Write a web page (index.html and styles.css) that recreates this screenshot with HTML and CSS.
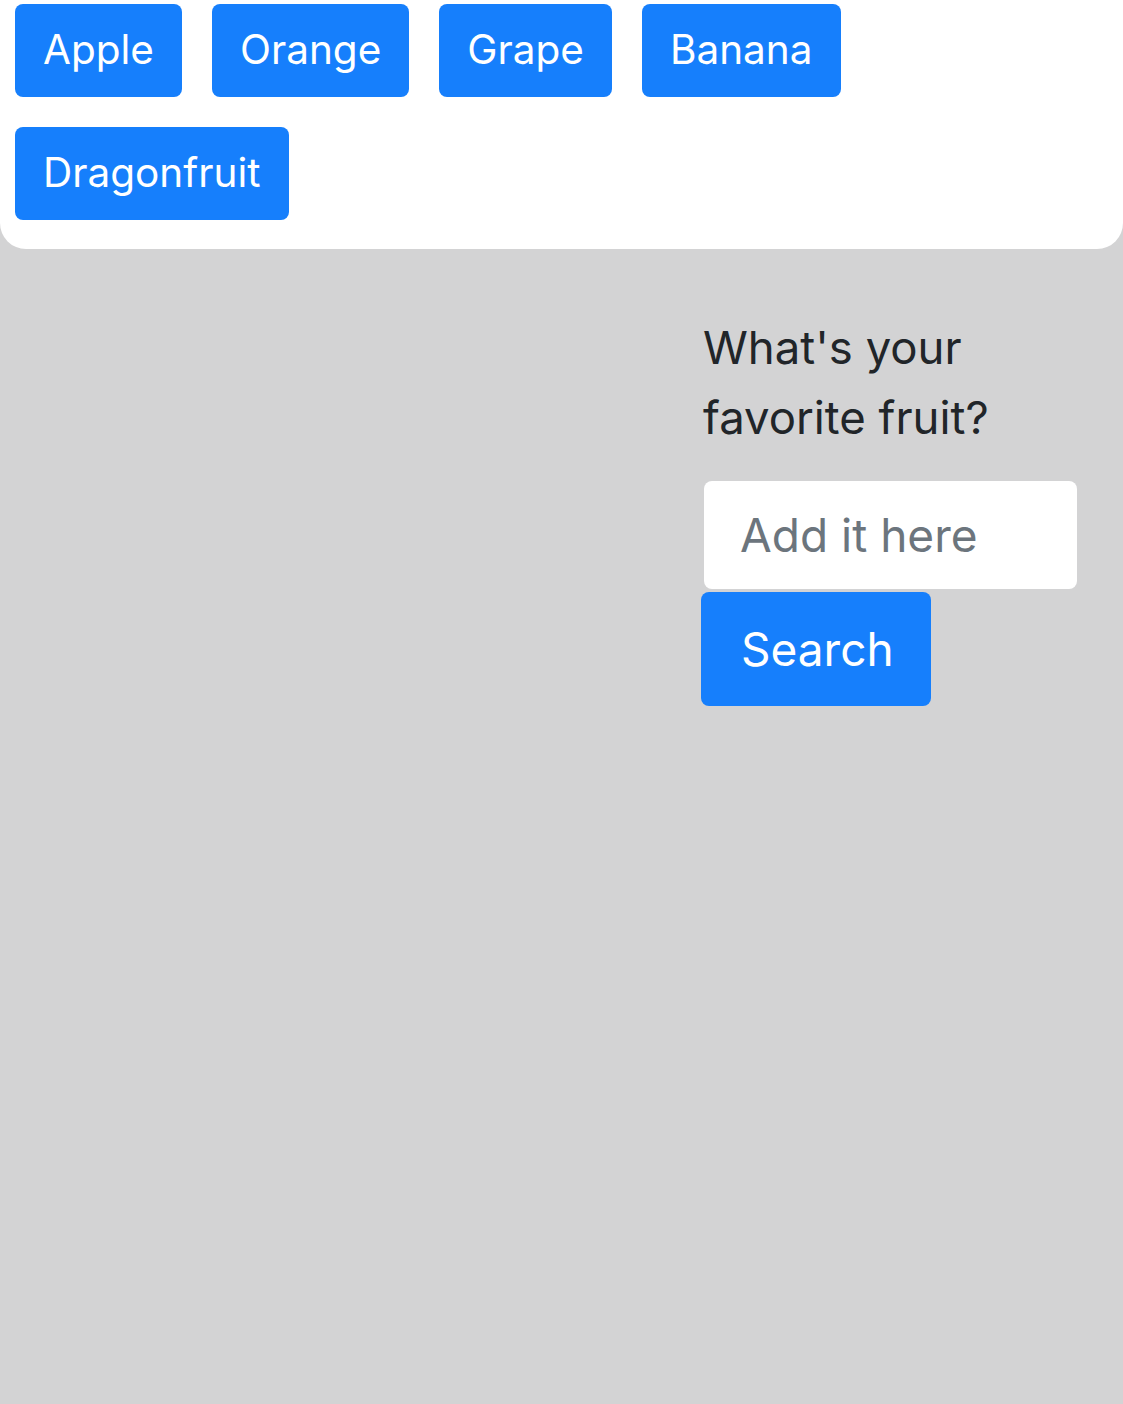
FILE: index.html
```html
<!DOCTYPE html>
<html>
<head>
<meta charset="utf-8">
<link rel="stylesheet" href="styles.css">
</head>
<body>
<div class="card">
  <div class="fruits">
    <button class="btn">Apple</button>
    <button class="btn">Orange</button>
    <button class="btn">Grape</button>
    <button class="btn">Banana</button>
    <button class="btn">Dragonfruit</button>
  </div>
</div>
<div class="main">
  <div class="form">
    <p class="question">What's your favorite fruit?</p>
    <input class="field" type="text" placeholder="Add it here">
    <button class="btn btn-search">Search</button>
  </div>
</div>
</body>
</html>
```

FILE: styles.css
```css
html, body {
  margin: 0;
  padding: 0;
  background: #d3d3d4;
  font-family: Inter, "Liberation Sans", sans-serif;
  height: 100%;
}
.card {
  background: #ffffff;
  height: 249px;
  border-radius: 0 0 26px 26px;
  box-sizing: border-box;
  padding: 4px 15px 0 15px;
}
.fruits {
  display: flex;
  flex-wrap: wrap;
  gap: 30px;
  width: 860px;
}
.btn {
  background: #167ffc;
  color: #ffffff;
  border: none;
  border-radius: 8px;
  font-family: Inter, "Liberation Sans", sans-serif;
  font-size: 40.5px;
  height: 93px;
  padding: 0 28px;
  line-height: 1;
  margin: 0;
}
.main {
  padding: 64px 0 0 701px;
}
.form {
  width: 376px;
}
.question {
  margin: 0 0 28px 2px;
  color: #212529;
  font-size: 45.5px;
  line-height: 70px;
}
.field {
  display: block;
  box-sizing: border-box;
  width: 373px;
  height: 108px;
  margin: 0 0 3px 3px;
  border: none;
  border-radius: 8px;
  background: #fff;
  padding: 0 36px;
  font-family: Inter, "Liberation Sans", sans-serif;
  font-size: 46px;
  color: #6c757d;
  outline: none;
}
.field::placeholder {
  color: #6c757d;
  opacity: 1;
}
.btn-search {
  display: block;
  height: 114px;
  width: 230px;
  padding: 0 40px;
  font-size: 46px;
  text-align: left;
}
```
